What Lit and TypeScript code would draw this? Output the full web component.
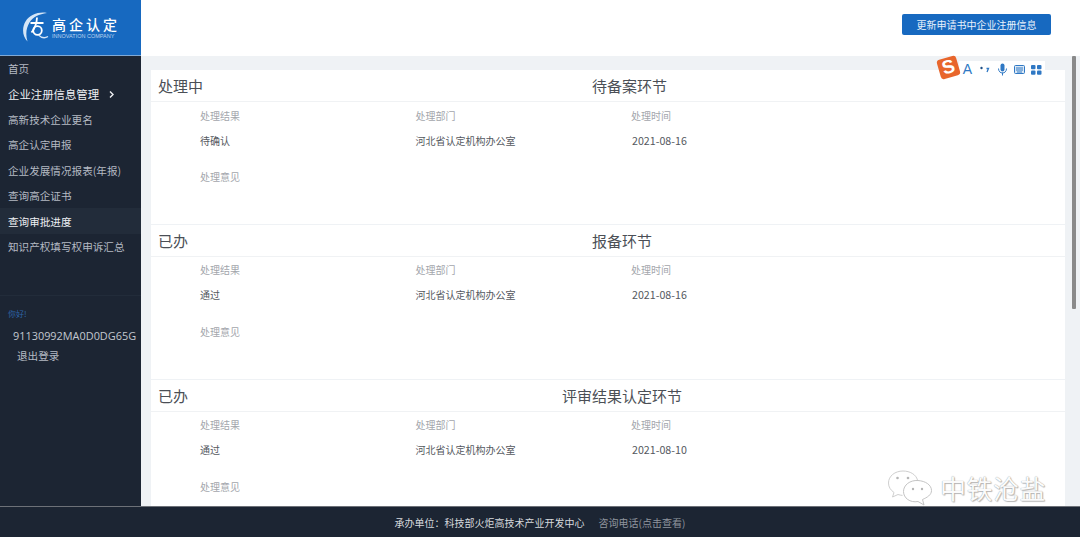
import { LitElement, html, css, svg, unsafeCSS } from "lit";
import { customElement } from "lit/decorators.js";

const CJK = unsafeCSS(`"Noto Sans CJK SC", "Liberation Sans", sans-serif`);

const menu = [
  { t: "首页" },
  { t: "企业注册信息管理", open: true },
  { t: "高新技术企业更名" },
  { t: "高企认定申报" },
  { t: "企业发展情况报表(年报)" },
  { t: "查询高企证书" },
  { t: "查询审批进度", active: true },
  { t: "知识产权填写权申诉汇总" },
];

const cards = [
  { state: "处理中", step: "待备案环节", offset: 434, result: "待确认", date: "2021-08-16" },
  { state: "已办", step: "报备环节", offset: 434, result: "通过", date: "2021-08-16" },
  { state: "已办", step: "评审结果认定环节", offset: 404, result: "通过", date: "2021-08-10" },
];

const logo = svg`<svg class="logo-mark" viewBox="0 0 27 31" width="27" height="31" aria-hidden="true">
  <path d="M25 1C17 -.5 8 2.500 3.500 9.500 0 15.500 0 24 5.500 29.500 3.500 23 4 16 7.500 10.500 11 5 17 2 25 1Z" fill="#d5e6f7"/>
  <path d="M8.500 11H21.500M15 5.500C14.800 11 13.500 15.500 9.500 20.500" fill="none" stroke="#fff" stroke-width="1.800"/>
  <circle cx="15.500" cy="18.500" r="4.300" fill="none" stroke="#fff" stroke-width="1.800"/>
  <path d="M16.500 23C19 25.500 22 27 26 24.500" fill="none" stroke="#d5e6f7" stroke-width="1.300"/>
</svg>`;

const wechat = svg`<svg class="wechat" viewBox="0 0 46 36" width="46" height="36" aria-hidden="true">
  <path d="M16 1C8 1 1.500 6 1.500 13 1.500 17 3.500 20 7 22.500L5.500 27 11 24.500C12.500 25 14 25.300 15.500 25.400" fill="#fff" stroke="#cfcfcf" stroke-width="1"/>
  <path d="M16 1C23 1 29 4.500 30.500 10" fill="none" stroke="#cfcfcf" stroke-width="1"/>
  <path d="M31 10.500C23 10 16.500 15 16.500 21.500 16.500 28 23 33 31 31.500L37 35 35.500 29.500C40 27.500 44.500 25 44.500 20.500 44.500 15 38.500 11 31 10.500Z" fill="#fff" stroke="#c4c4c4" stroke-width="1"/>
  <circle cx="10.500" cy="8" r="1.300" fill="#b5b5b5"/><circle cx="21" cy="8" r="1.300" fill="#b5b5b5"/>
  <circle cx="26" cy="19" r="1.200" fill="#b5b5b5"/><circle cx="35" cy="19" r="1.200" fill="#b5b5b5"/>
</svg>`;

@customElement("app-root")
export class AppRoot extends LitElement {
  static styles = css`
    :host {
      display: block;
      width: 1080px;
      height: 537px;
      overflow: hidden;
      position: relative;
      font-family: ${CJK};
    }
    .page {
      display: grid;
      grid-template-columns: 141px 1fr;
      grid-template-rows: 56px 450px 31px;
      height: 537px;
    }
    .brand {
      background: #1769c0;
      display: flex;
      align-items: center;
      padding-left: 22px;
      gap: 3px;
      box-sizing: border-box;
      border-bottom: 1px solid #7fa9d6;
    }
    .logo-mark { flex: none; }
    .brand-text { display: flex; flex-direction: column; color: #fff; }
    .brand-name { font-size: 14px; line-height: 18px; letter-spacing: 3px; font-weight: 500; white-space: nowrap; }
    .brand-en { font: 5.500px/7px "Liberation Sans", sans-serif; color: #b9d3ee; white-space: nowrap; }
    .topbar {
      background: #fff;
      display: flex;
      justify-content: flex-end;
      align-items: flex-start;
      padding: 14px 29px 0 0;
    }
    .update {
      width: 149px;
      height: 21px;
      border: 0;
      padding: 0;
      border-radius: 2px;
      background: #1769c0;
      color: #e8f1fb;
      font: 10px/21px ${CJK};
    }
    .side {
      background: #1c2533;
      color: #b4bac3;
      font-size: 10.600px;
      display: flex;
      flex-direction: column;
    }
    .item {
      height: 25.400px;
      line-height: 25px;
      padding-left: 8px;
      white-space: nowrap;
      display: flex;
      align-items: center;
      gap: 8px;
    }
    .item.open { color: #eef0f3; font-size: 11.400px; }
    .item.active { color: #eef0f3; background: #222c3a; }
    .chev { width: 9px; height: 9px; }
    .user {
      margin-top: 36px;
      border-top: 1px solid #222c3a;
      padding-top: 11px;
      display: flex;
      flex-direction: column;
    }
    .hello { font-size: 8px; line-height: 13px; color: #2e64a8; padding-left: 8px; }
    .uid { font: 10.900px/20px "Open Sans", "Liberation Sans", sans-serif; padding: 6px 0 0 13px; color: #c3c8cf; white-space: nowrap; }
    .logout { padding: 0 0 0 17px; line-height: 20px; }
    .main {
      background: #eff2f5;
      overflow: hidden;
      position: relative;
      padding: 14px 15px 0 10px;
      box-sizing: border-box;
    }
    .card {
      background: #fff;
      height: 154px;
      margin-bottom: 1px;
      box-sizing: border-box;
    }
    .card-head {
      height: 32px;
      border-bottom: 1px solid #f0f2f4;
      box-sizing: border-box;
      display: flex;
      align-items: center;
      position: relative;
      padding-left: 7px;
      color: #4b4f56;
      font-size: 15px;
      white-space: nowrap;
    }
    .state { position: absolute; }
    .fields {
      display: grid;
      grid-template-columns: repeat(3, 215.500px);
      padding: 4px 0 0 49px;
      font-size: 10px;
    }
    .card + .card .fields { padding-top: 3px; }
    .label { color: #a3a6ac; line-height: 20px; }
    .value { color: #54585e; line-height: 20px; margin-top: 5px; }
    .date { font-size: 10.700px; padding-left: 1px; }
    .note { color: #a3a6ac; line-height: 20px; margin-top: 16px; grid-column: 1 / -1; }
    .card + .card .note { margin-top: 17px; }
    .thumb {
      position: absolute;
      left: 931px;
      top: 0;
      width: 4px;
      height: 253px;
      background: #8a8a8a;
      border-radius: 1px;
    }
    .footer {
      grid-column: 1 / -1;
      background: #1c2533;
      border-top: 1px solid #6d7178;
      box-sizing: border-box;
      display: flex;
      justify-content: center;
      align-items: center;
      gap: 14px;
      font-size: 10px;
      color: #d6d9dd;
    }
    .footer .tel { color: #8f959e; }
    .ime {
      position: absolute;
      left: 939px;
      top: 57px;
      display: flex;
      align-items: center;
    }
    .ime-s {
      width: 19px;
      height: 19px;
      background: #e8662c;
      border-radius: 3px;
      transform: rotate(-16deg) scale(1.050);
      color: #fff;
      font: 700 18px/19px "Liberation Sans", sans-serif;
      text-align: center;
      flex: none;
      position: relative;
      z-index: 1;
    }
    .ime-panel {
      background: #fff;
      height: 17px;
      width: 86px;
      margin: 4px 0 0 1px;
      display: flex;
      align-items: center;
      color: #2f78c4;
      padding-left: 3px;
      gap: 6.300px;
      box-sizing: border-box;
    }
    .ime-a { font: 14px/17px "Liberation Sans", sans-serif; width: 11px; text-align: center; }
    .mark {
      position: absolute;
      left: 887px;
      top: 470px;
      display: flex;
      align-items: center;
      gap: 7px;
    }
    .wechat { flex: none; }
    .mark-text {
      font-size: 26px;
      line-height: 34px;
      letter-spacing: 0.500px;
      color: #fbfbfb;
      text-shadow: 0 0 1px #8c8c8c, 1px 1px 1px #bcbcbc;
      white-space: nowrap;
    }
  `;

  render() {
    return html`
      <div class="page">
        <div class="brand">
          ${logo}
          <div class="brand-text">
            <div class="brand-name">高企认定</div>
            <div class="brand-en">INNOVATION COMPANY</div>
          </div>
        </div>
        <div class="topbar"><button class="update">更新申请书中企业注册信息</button></div>
        <nav class="side">
          ${menu.map(
            (m) => html`<div class="item ${m.open ? "open" : ""} ${m.active ? "active" : ""}">
              ${m.t}
              ${m.open
                ? html`<svg class="chev" viewBox="0 0 9 9" aria-hidden="true"><path d="M3 1.500L6 4.500 3 7.500" fill="none" stroke="#eef0f3" stroke-width="1.400"/></svg>`
                : ""}
            </div>`
          )}
          <div class="user">
            <div class="hello">你好!</div>
            <div class="uid">91130992MA0D0DG65G</div>
            <div class="logout">退出登录</div>
          </div>
        </nav>
        <main class="main">
          ${cards.map(
            (c) => html`<section class="card">
              <div class="card-head">
                <span class="state">${c.state}</span>
                <span style="margin-left:${c.offset}px">${c.step}</span>
              </div>
              <div class="fields">
                <div class="label">处理结果</div>
                <div class="label">处理部门</div>
                <div class="label">处理时间</div>
                <div class="value">${c.result}</div>
                <div class="value">河北省认定机构办公室</div>
                <div class="value date">${c.date}</div>
                <div class="note">处理意见</div>
              </div>
            </section>`
          )}
          <div class="thumb"></div>
        </main>
        <footer class="footer">
          <span>承办单位：科技部火炬高技术产业开发中心</span>
          <span class="tel">咨询电话(点击查看)</span>
        </footer>
      </div>
      <div class="ime">
        <div class="ime-s">S</div>
        <div class="ime-panel">
          <span class="ime-a">A</span>
          <svg width="11" height="11" viewBox="0 0 11 11" aria-hidden="true"><circle cx="2.500" cy="4" r="1.200" fill="#1f4f86"/><path d="M7.500 4.500h2L8 8" fill="none" stroke="#2f78c4" stroke-width="1.300"/></svg>
          <svg width="11" height="13" viewBox="0 0 11 13" aria-hidden="true"><rect x="3.500" y="0.500" width="4" height="8" rx="2" fill="#2f78c4"/><path d="M1.500 5.500c0 6 8 6 8 0M5.500 9.500v3" fill="none" stroke="#2f78c4" stroke-width="1"/></svg>
          <svg width="11" height="9" viewBox="0 0 11 9" aria-hidden="true"><rect x="0.500" y="0.500" width="10" height="8" rx="1" fill="#dbe8f5" stroke="#2f78c4"/><path d="M2 3h7M2 5h7M3 7h5" stroke="#2f78c4" stroke-width="1"/></svg>
          <svg width="11" height="10" viewBox="0 0 11 10" aria-hidden="true"><rect x="0" y="0" width="4.500" height="4.300" rx="1" fill="#2f78c4"/><rect x="6" y="0" width="4.500" height="4.300" rx="1" fill="#2f78c4"/><rect x="0" y="5.500" width="4.500" height="4.300" rx="1" fill="#2f78c4"/><rect x="6" y="5.500" width="4.500" height="4.300" rx="1" fill="#2f78c4"/></svg>
        </div>
      </div>
      <div class="mark">${wechat}<span class="mark-text">中铁沧盐</span></div>
    `;
  }
}
